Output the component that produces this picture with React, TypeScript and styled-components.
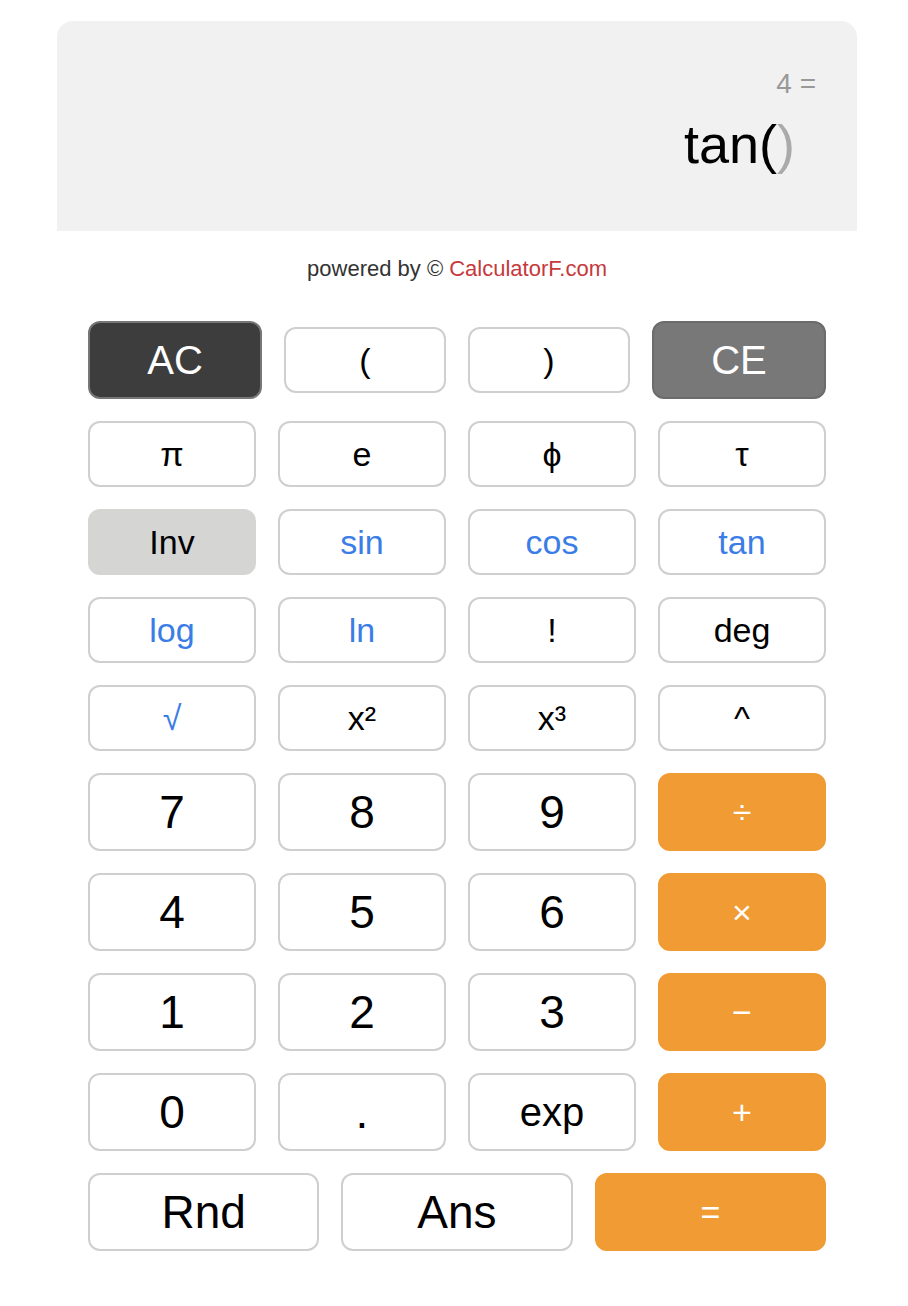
import React from "react";
import styled, { createGlobalStyle, css } from "styled-components";

const GlobalStyle = createGlobalStyle`
  body {
    margin: 0;
    background: #ffffff;
    font-family: "Liberation Sans", Arial, sans-serif;
  }
`;

type Variant = "plain" | "dark" | "mid" | "toggle" | "op";
type Size = "sm" | "md" | "lg";

interface KeyDef {
  label: React.ReactNode;
  variant?: Variant;
  blue?: boolean;
  size?: Size;
}

const sci: KeyDef[][] = [
  [{ label: "π" }, { label: "e" }, { label: "ϕ" }, { label: "τ" }],
  [
    { label: "Inv", variant: "toggle" },
    { label: "sin", blue: true },
    { label: "cos", blue: true },
    { label: "tan", blue: true },
  ],
  [
    { label: "log", blue: true },
    { label: "ln", blue: true },
    { label: "!" },
    { label: "deg" },
  ],
  [{ label: "√", blue: true }, { label: "x²" }, { label: "x³" }, { label: "^" }],
];

const op = (label: string): KeyDef => ({ label, variant: "op", size: "sm" });

const nums: KeyDef[][] = [
  [{ label: "7" }, { label: "8" }, { label: "9" }, op("÷")],
  [{ label: "4" }, { label: "5" }, { label: "6" }, op("×")],
  [{ label: "1" }, { label: "2" }, { label: "3" }, op("−")],
  [{ label: "0" }, { label: "." }, { label: "exp", size: "md" }, op("+")],
];

const App = () => {
  return (
    <>
      <GlobalStyle />
      <Page>
        <Calc>
          <Display>
            <History>4 =</History>
            <Expression>
              tan(<Ghost>)</Ghost>
            </Expression>
          </Display>
          <Powered>
            powered by © <Brand>CalculatorF.com</Brand>
          </Powered>
          <Keypad>
            <TopRow>
              <Key variant="dark" size="md" tall>
                AC
              </Key>
              <Key size="sm">(</Key>
              <Key size="sm">)</Key>
              <Key variant="mid" size="md" tall>
                CE
              </Key>
            </TopRow>
            {sci.map((row, i) => (
              <Row key={"s" + i}>
                {row.map((k, j) => (
                  <Key key={j} variant={k.variant} blue={k.blue} size="sm">
                    {k.label}
                  </Key>
                ))}
              </Row>
            ))}
            {nums.map((row, i) => (
              <Row key={"n" + i}>
                {row.map((k, j) => (
                  <Key key={j} variant={k.variant} size={k.size || "lg"} tall>
                    {k.label}
                  </Key>
                ))}
              </Row>
            ))}
            <BottomRow>
              <Key size="lg" tall>
                Rnd
              </Key>
              <Key size="lg" tall>
                Ans
              </Key>
              <Key variant="op" size="sm" tall>
                =
              </Key>
            </BottomRow>
          </Keypad>
        </Calc>
      </Page>
    </>
  );
};

export default App;

const Page = styled.div`
  padding: 21px 0 40px 57px;
`;

const Calc = styled.div`
  width: 800px;
`;

const Display = styled.div`
  height: 210px;
  box-sizing: border-box;
  background: #f1f1f1;
  border-radius: 16px 16px 0 0;
  padding: 47px 41px 0 0;
  display: flex;
  flex-direction: column;
  align-items: flex-end;
`;

const History = styled.div`
  font-size: 28px;
  line-height: 32px;
  color: #999999;
`;

const Expression = styled.div`
  margin-top: 13px;
  margin-right: 21px;
  font-size: 54px;
  line-height: 62px;
  color: #000000;
`;

const Ghost = styled.span`
  color: #aaaaaa;
`;

const Powered = styled.div`
  margin-top: 26px;
  text-align: center;
  font-size: 22px;
  line-height: 24px;
  color: #333333;
`;

const Brand = styled.span`
  color: #c6393c;
`;

const Keypad = styled.div`
  margin-top: 40px;
  padding: 0 31px;
  display: flex;
  flex-direction: column;
  gap: 22px;
`;

const TopRow = styled.div`
  display: grid;
  grid-template-columns: 174px 162px 162px 174px;
  gap: 22px;
  align-items: center;
`;

const Row = styled.div`
  display: grid;
  grid-template-columns: repeat(4, 1fr);
  gap: 22px;
`;

const BottomRow = styled.div`
  display: grid;
  grid-template-columns: repeat(3, 1fr);
  gap: 22px;
`;

const variants: Record<Variant, ReturnType<typeof css>> = {
  plain: css`
    background: #ffffff;
    border-color: #cfcfcf;
    color: #000000;
  `,
  dark: css`
    background: #3d3d3d;
    border-color: #777777;
    color: #ffffff;
  `,
  mid: css`
    background: #787878;
    border-color: #6c6c6c;
    color: #ffffff;
  `,
  toggle: css`
    background: #d5d5d4;
    border-color: #d5d5d4;
    color: #000000;
  `,
  op: css`
    background: #f09b33;
    border-color: #f09b33;
    color: #ffffff;
  `,
};

const sizes: Record<Size, string> = {
  sm: "34px",
  md: "40px",
  lg: "46px",
};

const Key = styled.button<{
  variant?: Variant;
  size?: Size;
  tall?: boolean;
  blue?: boolean;
}>`
  height: ${(p) => (p.tall ? "78px" : "66px")};
  box-sizing: border-box;
  border: 2px solid;
  border-radius: 12px;
  padding: 0;
  font-family: "Liberation Sans", Arial, sans-serif;
  font-size: ${(p) => sizes[p.size || "sm"]};
  display: flex;
  align-items: center;
  justify-content: center;
  cursor: pointer;
  ${(p) => variants[p.variant || "plain"]}
  ${(p) =>
    p.blue &&
    css`
      color: #3b7de6;
    `}
`;
